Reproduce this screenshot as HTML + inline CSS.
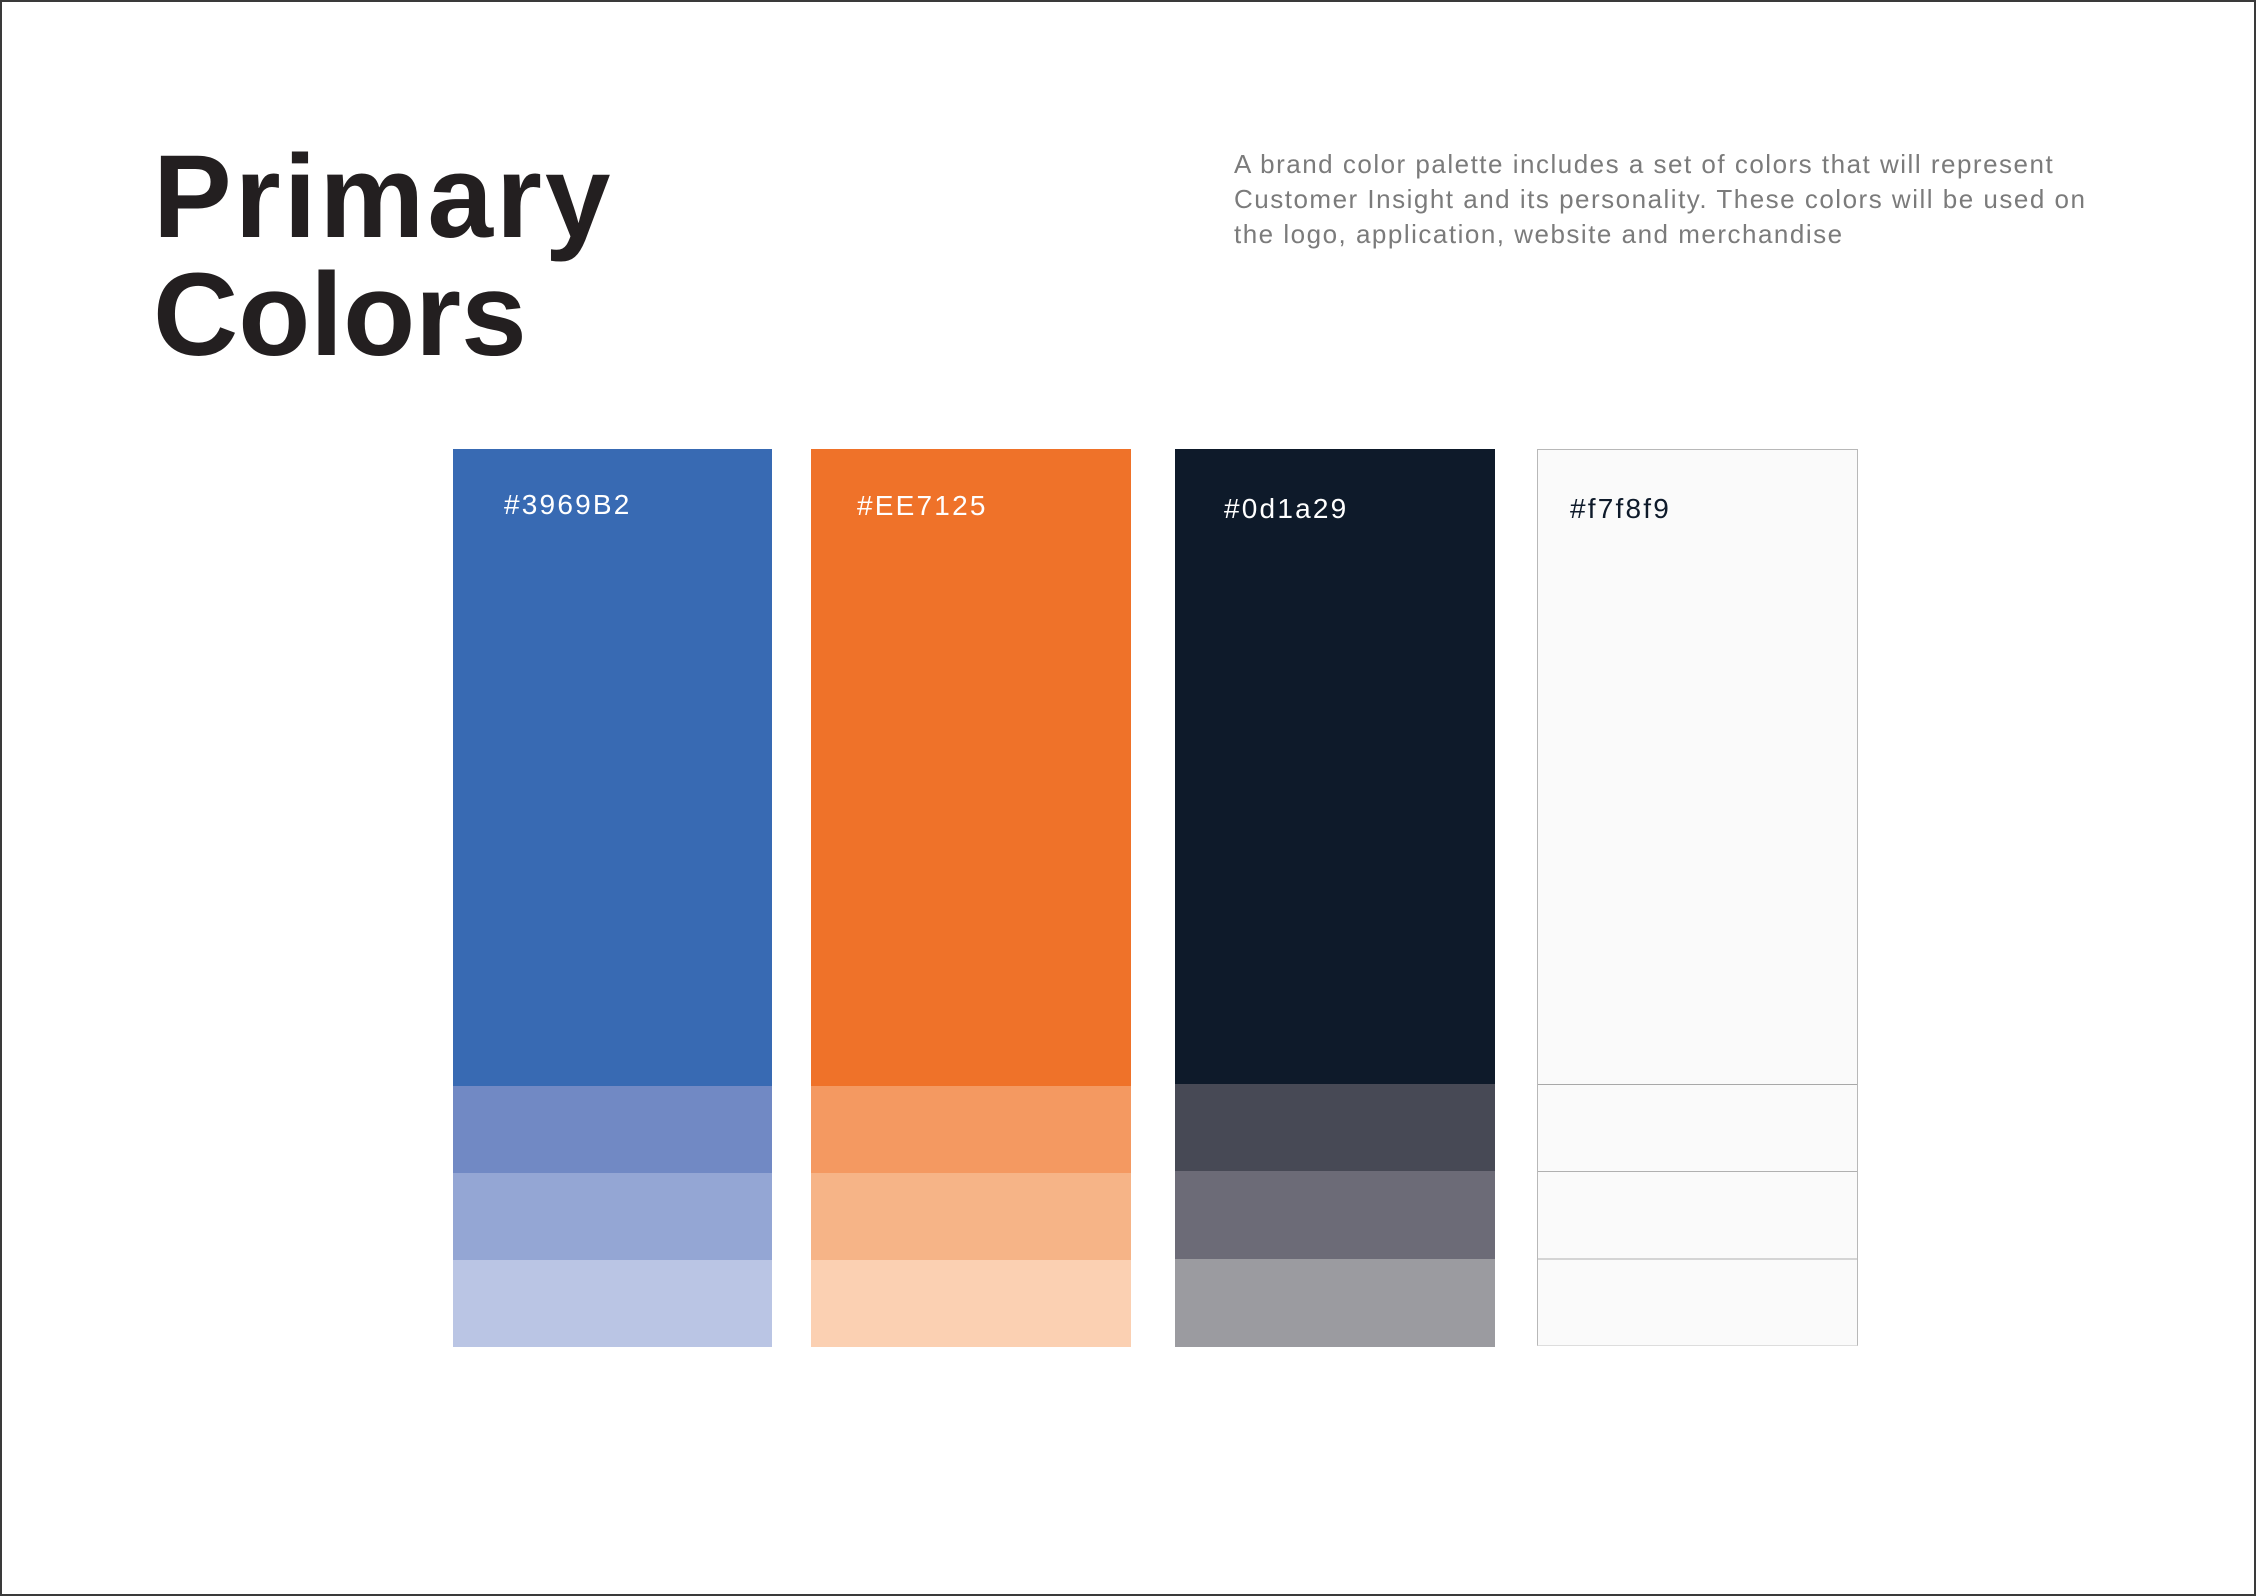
<!DOCTYPE html>
<html><head><meta charset="utf-8"><style>
html,body{margin:0;padding:0;}
body{width:2256px;height:1596px;position:relative;background:#fff;overflow:hidden;font-family:"Liberation Sans",sans-serif;}
.frame{position:absolute;left:0;top:0;width:2252px;height:1592px;border:2px solid #3a3a3a;}
.t{position:absolute;left:153px;font-weight:bold;font-size:118px;color:#231f20;line-height:1;white-space:nowrap;}
.p{position:absolute;left:1234px;top:147px;font-size:26px;letter-spacing:1.5px;line-height:35px;color:#7b7b7b;white-space:nowrap;}
.col{position:absolute;top:449px;width:319px;height:898px;}
.col div{position:absolute;left:0;width:100%;}
.lab{position:absolute;font-size:28px;letter-spacing:2.2px;line-height:1;white-space:nowrap;}
</style></head><body>
<div class="frame"></div>
<div class="t" style="top:138px;letter-spacing:3px">Primary</div>
<div class="t" style="top:256px">Colors</div>
<div class="p">A brand color palette includes a set of colors that will represent<br>Customer Insight and its personality. These colors will be used on<br>the logo, application, website and merchandise</div>

<div class="col" style="left:453px">
<div style="top:0;height:637px;background:#386ab3"></div>
<div style="top:637px;height:87px;background:#7189c4"></div>
<div style="top:724px;height:87px;background:#94a6d4"></div>
<div style="top:811px;height:87px;background:#bac5e4"></div>
</div>
<div class="col" style="left:811px;width:320px">
<div style="top:0;height:637px;background:#ef7229"></div>
<div style="top:637px;height:87px;background:#f49961"></div>
<div style="top:724px;height:87px;background:#f6b487"></div>
<div style="top:811px;height:87px;background:#fbd0b2"></div>
</div>
<div class="col" style="left:1175px;width:320px">
<div style="top:0;height:635px;background:#0e1a2a"></div>
<div style="top:635px;height:87px;background:#474955"></div>
<div style="top:722px;height:88px;background:#6c6b77"></div>
<div style="top:810px;height:88px;background:#9b9ba0"></div>
</div>
<div class="col" style="left:1537px;width:321px;top:449px;height:897px;box-sizing:border-box;border:1px solid #b8b8b8;border-bottom-color:#ddd;background:#fafafa">
<div style="top:634px;height:1px;background:#a8a8a8"></div>
<div style="top:721px;height:1px;background:#b0b0b0"></div>
<div style="top:808px;height:2px;background:#d4d4d4"></div>
</div>

<div class="lab" style="left:504px;top:491px;color:#fff">#3969B2</div>
<div class="lab" style="left:857px;top:492px;color:#fff">#EE7125</div>
<div class="lab" style="left:1224px;top:495px;color:#fff">#0d1a29</div>
<div class="lab" style="left:1570px;top:495px;color:#0e1a2a">#f7f8f9</div>
</body></html>
